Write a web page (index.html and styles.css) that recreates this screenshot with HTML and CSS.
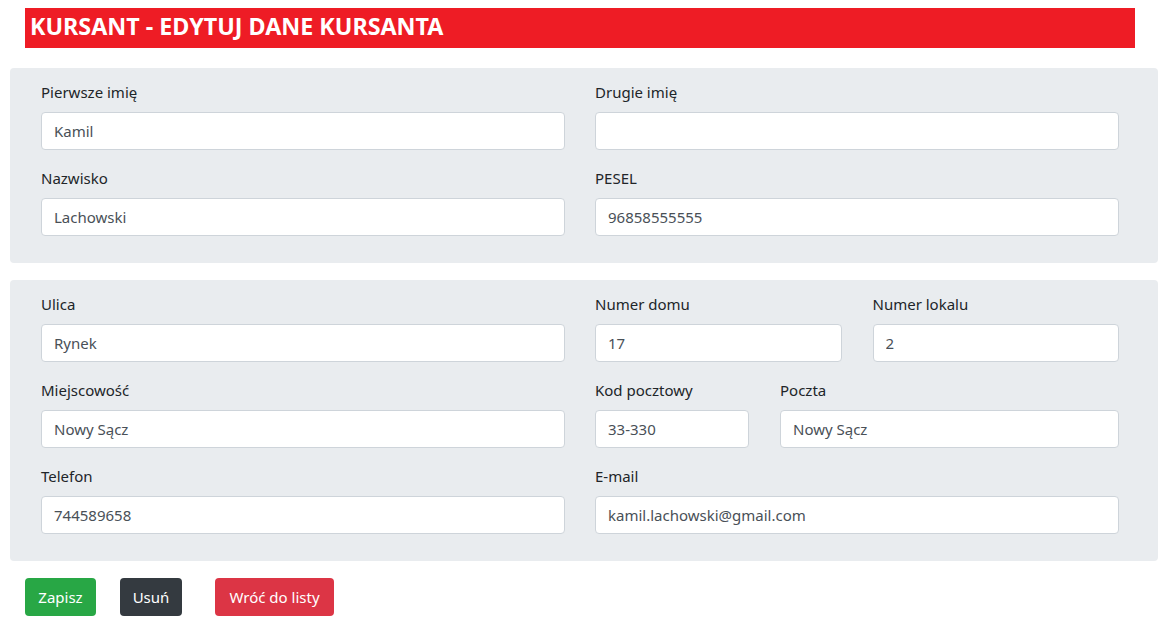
FILE: index.html
```html
<!DOCTYPE html>
<html lang="pl">
<head>
<meta charset="utf-8">
<title>Kursant - edytuj dane kursanta</title>
<link rel="stylesheet" href="styles.css">
</head>
<body>
<h1 class="title">KURSANT - EDYTUJ DANE KURSANTA</h1>

<form class="form">
  <div class="panel">
    <div class="row">
      <div class="group"><label>Pierwsze imię</label><input class="input" type="text" value="Kamil"></div>
      <div class="group"><label>Drugie imię</label><input class="input" type="text" value=""></div>
    </div>
    <div class="row">
      <div class="group"><label>Nazwisko</label><input class="input" type="text" value="Lachowski"></div>
      <div class="group"><label>PESEL</label><input class="input" type="text" value="96858555555"></div>
    </div>
  </div>

  <div class="panel">
    <div class="row">
      <div class="group"><label>Ulica</label><input class="input" type="text" value="Rynek"></div>
      <div class="sub sub-half">
        <div class="group"><label>Numer domu</label><input class="input" type="text" value="17"></div>
        <div class="group"><label>Numer lokalu</label><input class="input" type="text" value="2"></div>
      </div>
    </div>
    <div class="row">
      <div class="group"><label>Miejscowość</label><input class="input" type="text" value="Nowy Sącz"></div>
      <div class="sub sub-third">
        <div class="group"><label>Kod pocztowy</label><input class="input" type="text" value="33-330"></div>
        <div class="group"><label>Poczta</label><input class="input" type="text" value="Nowy Sącz"></div>
      </div>
    </div>
    <div class="row">
      <div class="group"><label>Telefon</label><input class="input" type="text" value="744589658"></div>
      <div class="group"><label>E-mail</label><input class="input" type="text" value="kamil.lachowski@gmail.com"></div>
    </div>
  </div>

  <div class="actions">
    <button type="button" class="btn btn-save">Zapisz</button>
    <button type="button" class="btn btn-delete">Usuń</button>
    <button type="button" class="btn btn-back">Wróć do listy</button>
  </div>
</form>
</body>
</html>
```

FILE: styles.css
```css
* { box-sizing: border-box; }

body {
  margin: 8px 0 0 0;
  font-family: "Noto Sans", "Open Sans", sans-serif;
  font-size: 15px;
  line-height: 24px;
  color: #212529;
  background: #fff;
}

.title {
  margin: 0 0 0 25px;
  width: 1110px;
  height: 40px;
  background: #ee1c25;
  color: #fff;
  font-size: 23.3px;
  font-weight: 700;
  line-height: 36px;
  padding: 0 5px;
}

.form {
  margin-top: 20px;
}

.panel {
  margin: 0 10px 17px 10px;
  background: #e9ecef;
  border-radius: 4px;
  padding: 12px 39px 11px 31px;
}

.row {
  display: grid;
  grid-template-columns: 1fr 1fr;
  column-gap: 30px;
}

.sub {
  display: grid;
  column-gap: 31px;
}

.sub-half { grid-template-columns: 1fr 1fr; }
.sub-third { grid-template-columns: 154px 1fr; }

.group {
  margin-bottom: 16px;
  min-width: 0;
}

.group label {
  display: block;
  margin-bottom: 8px;
  line-height: 24px;
}

.input {
  display: block;
  width: 100%;
  height: 38px;
  padding: 6px 12px;
  font-family: inherit;
  font-size: 15px;
  line-height: 24px;
  color: #495057;
  background: #fff;
  border: 1px solid #ced4da;
  border-radius: 4px;
  outline: none;
}

.actions {
  display: flex;
  align-items: center;
  padding-left: 25px;
}

.btn {
  height: 38px;
  padding: 0;
  font-family: inherit;
  font-size: 15px;
  line-height: 24px;
  color: #fff;
  border: 1px solid transparent;
  border-radius: 4px;
  white-space: nowrap;
  text-align: center;
}

.btn-save { background: #28a745; width: 71px; margin-right: 24px; }
.btn-delete { background: #343a40; width: 62px; margin-right: 33px; }
.btn-back { background: #dc3545; width: 119px; }
```
